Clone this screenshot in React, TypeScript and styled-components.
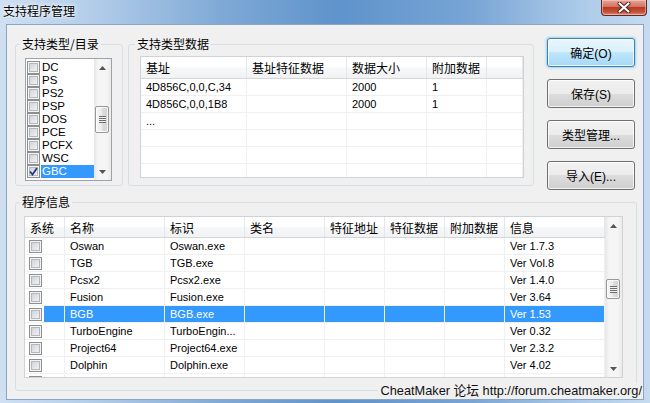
import React from "react";
import styled, { createGlobalStyle } from "styled-components";

const UI_FONT = `"Liberation Sans", "Noto Sans CJK SC", sans-serif`;
const CJK_FONT = `"Noto Sans CJK SC", "Liberation Sans", sans-serif`;
const SELECT_BLUE = "#3399ff";
const GRID = "#f0f0f0";

const GlobalStyle = createGlobalStyle`
	html, body {
		margin: 0;
		padding: 0;
		background: #ffffff;
	}
	body {
		font-family: ${UI_FONT};
		font-size: 11px;
		color: #000;
	}
	* {
		box-sizing: border-box;
	}
`;

const Window = styled.div`
	width: 650px;
	height: 403px;
	display: flex;
	flex-direction: column;
	padding: 0 6px 3px 6px;
	overflow: hidden;
	background: linear-gradient(
		90deg,
		#cfe0f2 0%,
		#b3cde9 14%,
		#7fa9d6 34%,
		#5f93cb 52%,
		#77a4d5 72%,
		#a9c8e8 88%,
		#c6dbf0 100%
	);
`;

const TitleBar = styled.div`
	height: 24px;
	display: flex;
	justify-content: space-between;
	align-items: flex-start;
	margin-left: -3px;
	margin-right: -3px;
`;

const Title = styled.span`
	font-family: ${CJK_FONT};
	font-size: 12px;
	line-height: 16px;
	padding-top: 3px;
	color: #000;
	text-shadow: 0 0 6px #ffffff, 0 0 3px #ffffff;
`;

const CloseButton = styled.div`
	width: 46px;
	height: 16px;
	display: flex;
	align-items: center;
	justify-content: center;
	border: 1px solid #5a2a2a;
	border-top: none;
	border-radius: 0 0 4px 4px;
	background: linear-gradient(#e7a395 0%, #d27362 45%, #b73a25 50%, #c7513c 80%, #e08a6f 100%);
	box-shadow: inset 0 0 0 1px rgba(255, 220, 210, 0.5);
`;

const Client = styled.div`
	flex: 1;
	position: relative;
	background: #f0f0f0;
	border: 1px solid #8aa5c4;
	padding: 11px 0 0 8px;
`;

const TopRow = styled.div`
	display: flex;
	align-items: flex-start;
`;

interface BoxProps {
	$w: number;
	$h: number;
	$ml?: number;
	$mt?: number;
}

const GroupBox = styled.fieldset<BoxProps>`
	width: ${(p) => p.$w}px;
	height: ${(p) => p.$h}px;
	margin: ${(p) => p.$mt || 0}px 0 0 ${(p) => p.$ml || 0}px;
	padding: 0;
	min-width: 0;
	border: 1px solid #d5dfe5;
	border-radius: 3px;
`;

const Legend = styled.legend<{ $ml: number }>`
	margin-left: ${(p) => p.$ml}px;
	padding: 0 2px;
	font-family: ${CJK_FONT};
	font-size: 12px;
	line-height: 16px;
	color: #000;
`;

const ListBox = styled.div`
	width: 87px;
	height: 123px;
	margin: 6px 0 0 9px;
	border: 1px solid #9ea3aa;
	background: #fff;
	display: flex;
	overflow: hidden;
`;

const ListItems = styled.div`
	flex: 1;
	padding-top: 2px;
	display: flex;
	flex-direction: column;
`;

const ListItem = styled.div`
	height: 13px;
	display: flex;
	align-items: center;
	padding-left: 1px;
`;

const ItemLabel = styled.span<{ $sel?: boolean }>`
	flex: 1;
	height: 13px;
	margin-left: 1px;
	padding-left: 1px;
	font-size: 11.5px;
	line-height: 13px;
	background: ${(p) => (p.$sel ? SELECT_BLUE : "transparent")};
	color: ${(p) => (p.$sel ? "#fff" : "#000")};
`;

const CheckBox = styled.span`
	width: 13px;
	height: 13px;
	flex: none;
	display: flex;
	align-items: center;
	justify-content: center;
	border: 1px solid #8e8f8f;
	background: linear-gradient(135deg, #c6cad0 0%, #e4e6e9 55%, #f7f7f7 100%);
	box-shadow: inset 0 0 0 1px #f4f4f4, inset 0 0 0 2px #b4b8bd;
`;

const ScrollBar = styled.div<{ $w: number }>`
	width: ${(p) => p.$w}px;
	flex: none;
	display: flex;
	flex-direction: column;
	background: linear-gradient(90deg, #e6e6e6 0%, #f5f5f5 25%, #f5f5f5 75%, #eaeaea 100%);
`;

const ScrollArrow = styled.div`
	height: 17px;
	flex: none;
	display: flex;
	align-items: center;
	justify-content: center;
`;

const Track = styled.div`
	flex: 1;
	padding: 0 2px 0 1px;
`;

const Thumb = styled.div<{ $h: number }>`
	height: ${(p) => p.$h}px;
	border: 1px solid #979797;
	border-radius: 2px;
	display: flex;
	align-items: center;
	justify-content: center;
	background: linear-gradient(90deg, #f5f5f5 0%, #ececec 45%, #dcdcdc 55%, #d4d4d4 100%);
	box-shadow: inset 0 0 0 1px rgba(255, 255, 255, 0.8);
`;

const Grip = styled.span`
	width: 7px;
	height: 7px;
	background: repeating-linear-gradient(#6d6d6d 0px, #6d6d6d 1px, #f2f2f2 1px, #f2f2f2 2px);
`;

const ListView = styled.div<BoxProps>`
	width: ${(p) => p.$w}px;
	height: ${(p) => p.$h}px;
	margin: ${(p) => p.$mt || 0}px 0 0 ${(p) => p.$ml || 0}px;
	border: 1px solid #cfd2d6;
	background: #fff;
	display: flex;
	overflow: hidden;
`;

const Table = styled.div`
	flex: 1;
	display: flex;
	flex-direction: column;
	overflow: hidden;
`;

const HeaderRow = styled.div<{ $cols: string; $h: number }>`
	display: grid;
	grid-template-columns: ${(p) => p.$cols};
	height: ${(p) => p.$h}px;
	flex: none;
	border-bottom: 1px solid #d5d5d5;
	background: linear-gradient(#ffffff 0%, #ffffff 45%, #f6f7f8 55%, #f1f2f4 100%);
`;

const HeaderCell = styled.div`
	padding-left: 5px;
	border-right: 1px solid #e3e6ea;
	font-family: ${CJK_FONT};
	font-size: 12px;
	display: flex;
	align-items: center;
	white-space: nowrap;
	overflow: hidden;
`;

const Row = styled.div<{ $cols: string }>`
	display: grid;
	grid-template-columns: ${(p) => p.$cols};
	height: 17px;
	flex: none;
	border-bottom: 1px solid ${GRID};
`;

const Cell = styled.div<{ $sel?: boolean }>`
	padding-left: 5px;
	border-right: 1px solid ${GRID};
	line-height: 16px;
	font-size: 11px;
	white-space: nowrap;
	overflow: hidden;
	background: ${(p) => (p.$sel ? SELECT_BLUE : "transparent")};
	color: ${(p) => (p.$sel ? "#fff" : "#000")};
`;

const CheckCell = styled.div`
	display: flex;
	align-items: center;
	padding-left: 4px;
	border-right: 1px solid ${GRID};
`;

const CheckFill = styled.span<{ $sel?: boolean }>`
	flex: 1;
	align-self: stretch;
	margin-left: 2px;
	background: ${(p) => (p.$sel ? SELECT_BLUE : "transparent")};
`;

const ButtonColumn = styled.div`
	display: flex;
	flex-direction: column;
	gap: 12px;
	margin: 2px 0 0 13px;
`;

const Button = styled.button<{ $default?: boolean }>`
	width: 88px;
	height: 29px;
	padding: 0;
	font-family: ${UI_FONT};
	font-size: 12px;
	color: #000;
	border-radius: 3px;
	border: 1px solid ${(p) => (p.$default ? "#3c7fb1" : "#707070")};
	background: ${(p) =>
		p.$default
			? "linear-gradient(#eaf6fd 0%, #d9f0fc 50%, #bee6fd 50%, #a7d9f5 100%)"
			: "linear-gradient(#f2f2f2 0%, #ebebeb 50%, #dddddd 50%, #cfcfcf 100%)"};
	box-shadow: inset 0 0 0 1px rgba(255, 255, 255, 0.75)
		${(p) => (p.$default ? ", 0 0 2px 1px rgba(120, 200, 245, 0.7)" : "")};
`;

const Footer = styled.div`
	position: absolute;
	right: 1px;
	bottom: 0;
	padding-left: 3px;
	background: #f0f0f0;
	font-size: 12.75px;
	line-height: 16px;
	color: #111;
`;

const UpArrow = () => (
	<svg width="7" height="4" viewBox="0 0 7 4">
		<polygon points="0,4 3.5,0 7,4" fill="#555" />
	</svg>
);

const DownArrow = () => (
	<svg width="7" height="4" viewBox="0 0 7 4">
		<polygon points="0,0 7,0 3.5,4" fill="#555" />
	</svg>
);

const CheckMark = () => (
	<svg width="9" height="9" viewBox="0 0 9 9">
		<path d="M1 4.5 L3.5 7.5 L8 1" stroke="#1f3a8a" strokeWidth="1.8" fill="none" />
	</svg>
);

function VScroll({ width, top, size }: { width: number; top: number; size: number }) {
	return (
		<ScrollBar $w={width}>
			<ScrollArrow>
				<UpArrow />
			</ScrollArrow>
			<Track>
				<Thumb $h={size} style={{ marginTop: top }}>
					<Grip />
				</Thumb>
			</Track>
			<ScrollArrow>
				<DownArrow />
			</ScrollArrow>
		</ScrollBar>
	);
}

const typeList = ["DC", "PS", "PS2", "PSP", "DOS", "PCE", "PCFX", "WSC", "GBC"];

const dataCols = "106px 100px 80px 60px 1fr";
const dataHeaders = ["基址", "基址特征数据", "数据大小", "附加数据", ""];
const dataRows = [
	["4D856C,0,0,C,34", "", "2000", "1", ""],
	["4D856C,0,0,1B8", "", "2000", "1", ""],
	["...", "", "", "", ""],
	["", "", "", "", ""],
	["", "", "", "", ""],
	["", "", "", "", ""],
];

const progCols = "40px 100px 80px 80px 60px 60px 60px 100px";
const progHeaders = ["系统", "名称", "标识", "类名", "特征地址", "特征数据", "附加数据", "信息"];
const programs = [
	["Oswan", "Oswan.exe", "Ver 1.7.3"],
	["TGB", "TGB.exe", "Ver Vol.8"],
	["Pcsx2", "Pcsx2.exe", "Ver 1.4.0"],
	["Fusion", "Fusion.exe", "Ver 3.64"],
	["BGB", "BGB.exe", "Ver 1.53"],
	["TurboEngine", "TurboEngin...", "Ver 0.32"],
	["Project64", "Project64.exe", "Ver 2.3.2"],
	["Dolphin", "Dolphin.exe", "Ver 4.02"],
	["", "", ""],
];
const selectedProgram = "BGB";

export default function App() {
	return (
		<>
			<GlobalStyle />
			<Window>
				<TitleBar>
					<Title>支持程序管理</Title>
					<CloseButton>
						<svg width="14" height="11" viewBox="0 0 14 11">
							<path d="M2.5 1.5 L11.5 9.5 M11.5 1.5 L2.5 9.5" stroke="#4a2020" strokeWidth="4" strokeLinecap="round" />
							<path d="M2.5 1.5 L11.5 9.5 M11.5 1.5 L2.5 9.5" stroke="#ffffff" strokeWidth="2.2" strokeLinecap="round" />
						</svg>
					</CloseButton>
				</TitleBar>
				<Client>
					<TopRow>
						<GroupBox $w={108} $h={150}>
							<Legend $ml={4}>支持类型/目录</Legend>
							<ListBox>
								<ListItems>
									{typeList.map((t) => (
										<ListItem key={t}>
											<CheckBox>{t === "GBC" && <CheckMark />}</CheckBox>
											<ItemLabel $sel={t === "GBC"}>{t}</ItemLabel>
										</ListItem>
									))}
								</ListItems>
								<VScroll width={17} top={30} size={27} />
							</ListBox>
						</GroupBox>
						<GroupBox $w={406} $h={150} $ml={5}>
							<Legend $ml={6}>支持类型数据</Legend>
							<ListView $w={384} $h={122} $ml={11} $mt={4}>
								<Table>
									<HeaderRow $cols={dataCols} $h={22}>
										{dataHeaders.map((h, i) => (
											<HeaderCell key={i}>{h}</HeaderCell>
										))}
									</HeaderRow>
									{dataRows.map((r, i) => (
										<Row key={i} $cols={dataCols}>
											{r.map((c, j) => (
												<Cell key={j}>{c}</Cell>
											))}
										</Row>
									))}
								</Table>
							</ListView>
						</GroupBox>
						<ButtonColumn>
							<Button $default>确定(O)</Button>
							<Button>保存(S)</Button>
							<Button>类型管理...</Button>
							<Button>导入(E)...</Button>
						</ButtonColumn>
					</TopRow>
					<GroupBox $w={622} $h={197} $mt={4}>
						<Legend $ml={4}>程序信息</Legend>
						<ListView $w={599} $h={162} $ml={8} $mt={6}>
							<Table>
								<HeaderRow $cols={progCols} $h={21}>
									{progHeaders.map((h) => (
										<HeaderCell key={h}>{h}</HeaderCell>
									))}
								</HeaderRow>
								{programs.map(([name, exe, info], i) => {
									const sel = name === selectedProgram;
									return (
										<Row key={i} $cols={progCols}>
											<CheckCell>
												<CheckBox />
												<CheckFill $sel={sel} />
											</CheckCell>
											<Cell $sel={sel}>{name}</Cell>
											<Cell $sel={sel}>{exe}</Cell>
											<Cell $sel={sel} />
											<Cell $sel={sel} />
											<Cell $sel={sel} />
											<Cell $sel={sel} />
											<Cell $sel={sel}>{info}</Cell>
										</Row>
									);
								})}
							</Table>
							<VScroll width={17} top={45} size={20} />
						</ListView>
					</GroupBox>
					<Footer>CheatMaker 论坛 http://forum.cheatmaker.org/</Footer>
				</Client>
			</Window>
		</>
	);
}
